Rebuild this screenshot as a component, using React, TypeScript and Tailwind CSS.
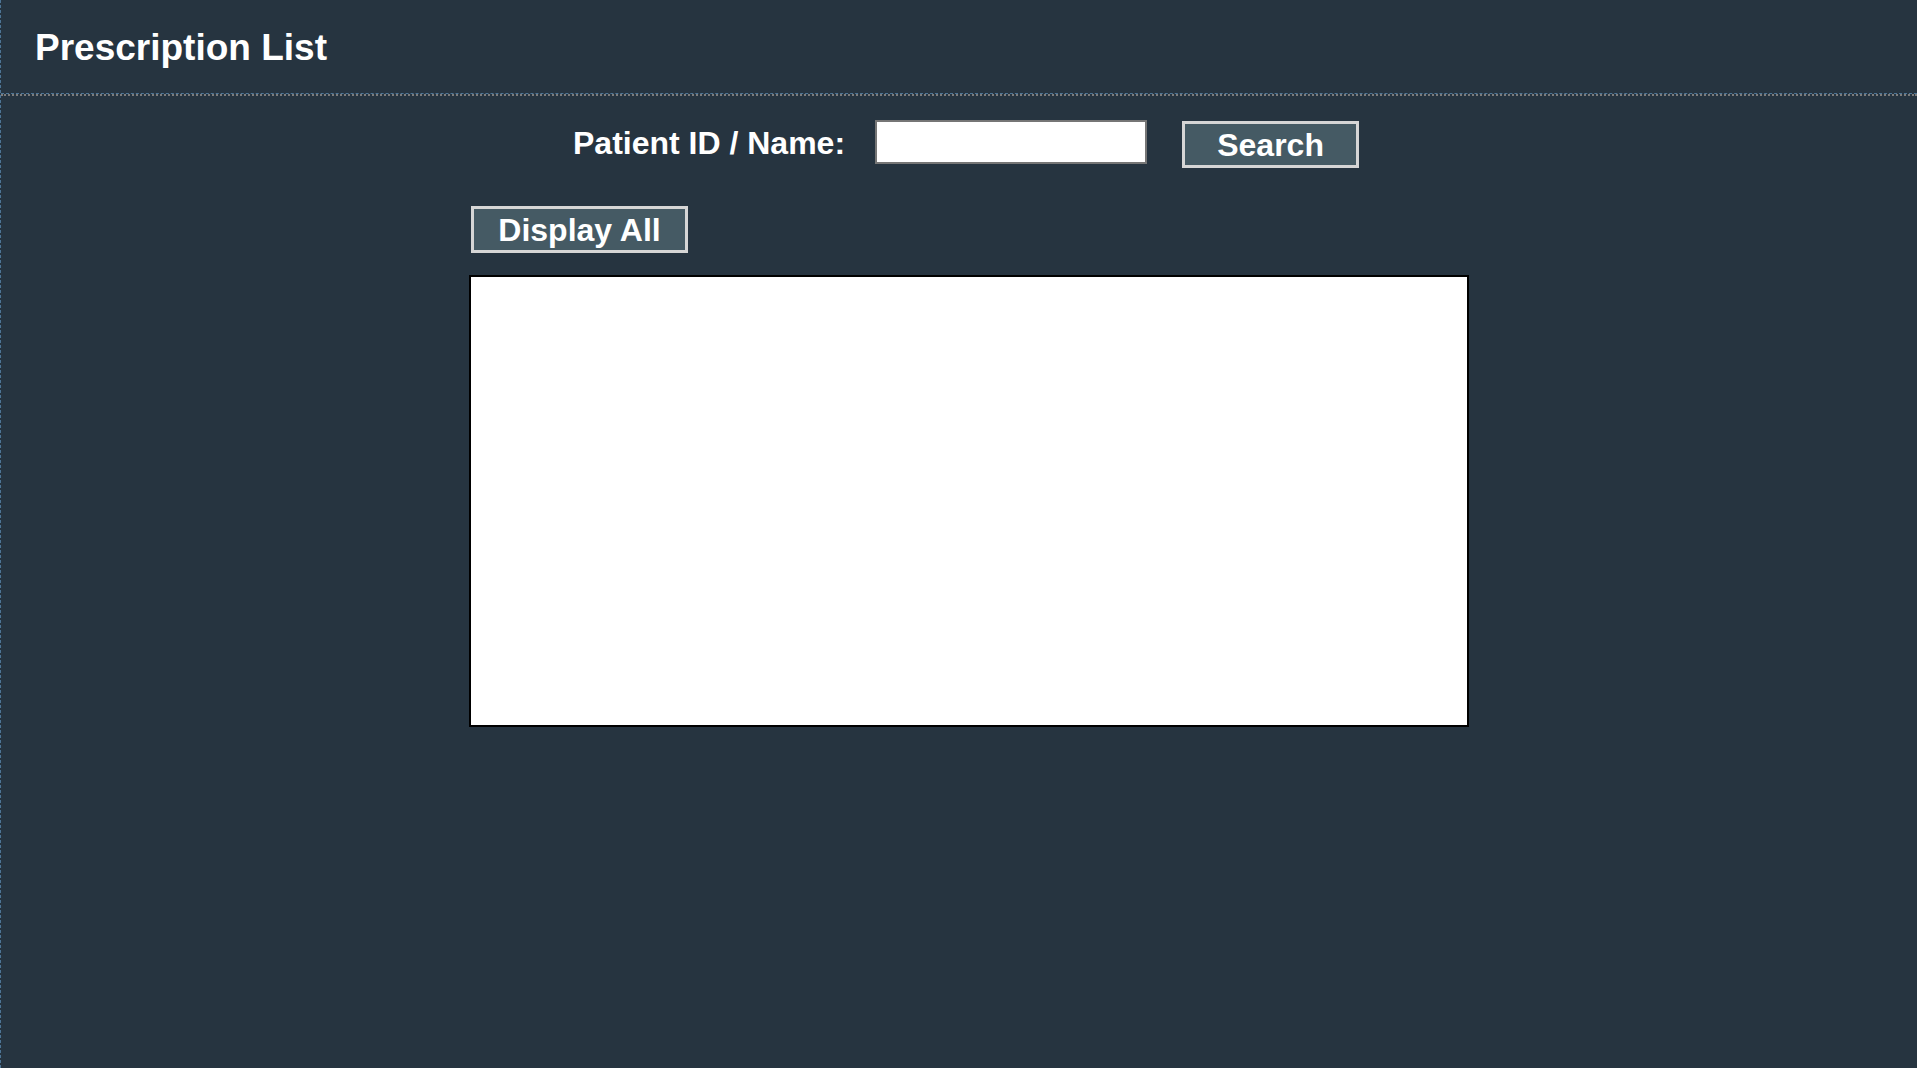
import React from "react";

export default function App() {
  return (
    <div
      className="w-full h-[1068px] bg-[#263440] border-l border-dashed border-[#4d7596] text-white"
      style={{ fontFamily: "'Liberation Sans', Arial, sans-serif" }}
    >
      <header className="h-[94px] flex items-center pl-[34px] pt-[2px] border-b border-dashed border-[#4d7596]">
        <h1 className="text-[37px] font-bold leading-none">Prescription List</h1>
      </header>
      <div className="border-t-2 border-dotted border-[#7c7c7c]" />
      <main className="w-[1000px] ml-[468px]">
        <div className="flex items-start mt-[24px]">
          <label className="ml-[104px] mr-[30px] h-[44px] pt-[1px] text-[32px] font-bold leading-[44px] whitespace-nowrap">
            Patient ID / Name:
          </label>
          <input
            type="text"
            className="w-[272px] h-[44px] bg-white border-2 border-[#767676] outline-none"
          />
          <button className="ml-[35px] mt-[1px] w-[177px] h-[47px] bg-[#455a64] border-[3px] border-[#d6d6d6] text-[32px] font-bold leading-none text-white">
            Search
          </button>
        </div>
        <button className="mt-[38px] ml-[2px] w-[217px] h-[47px] bg-[#455a64] border-[3px] border-[#d6d6d6] text-[32px] font-bold leading-none text-white block">
          Display All
        </button>
        <div className="mt-[22px] w-[1000px] h-[452px] bg-white border-2 border-black" />
      </main>
    </div>
  );
}
